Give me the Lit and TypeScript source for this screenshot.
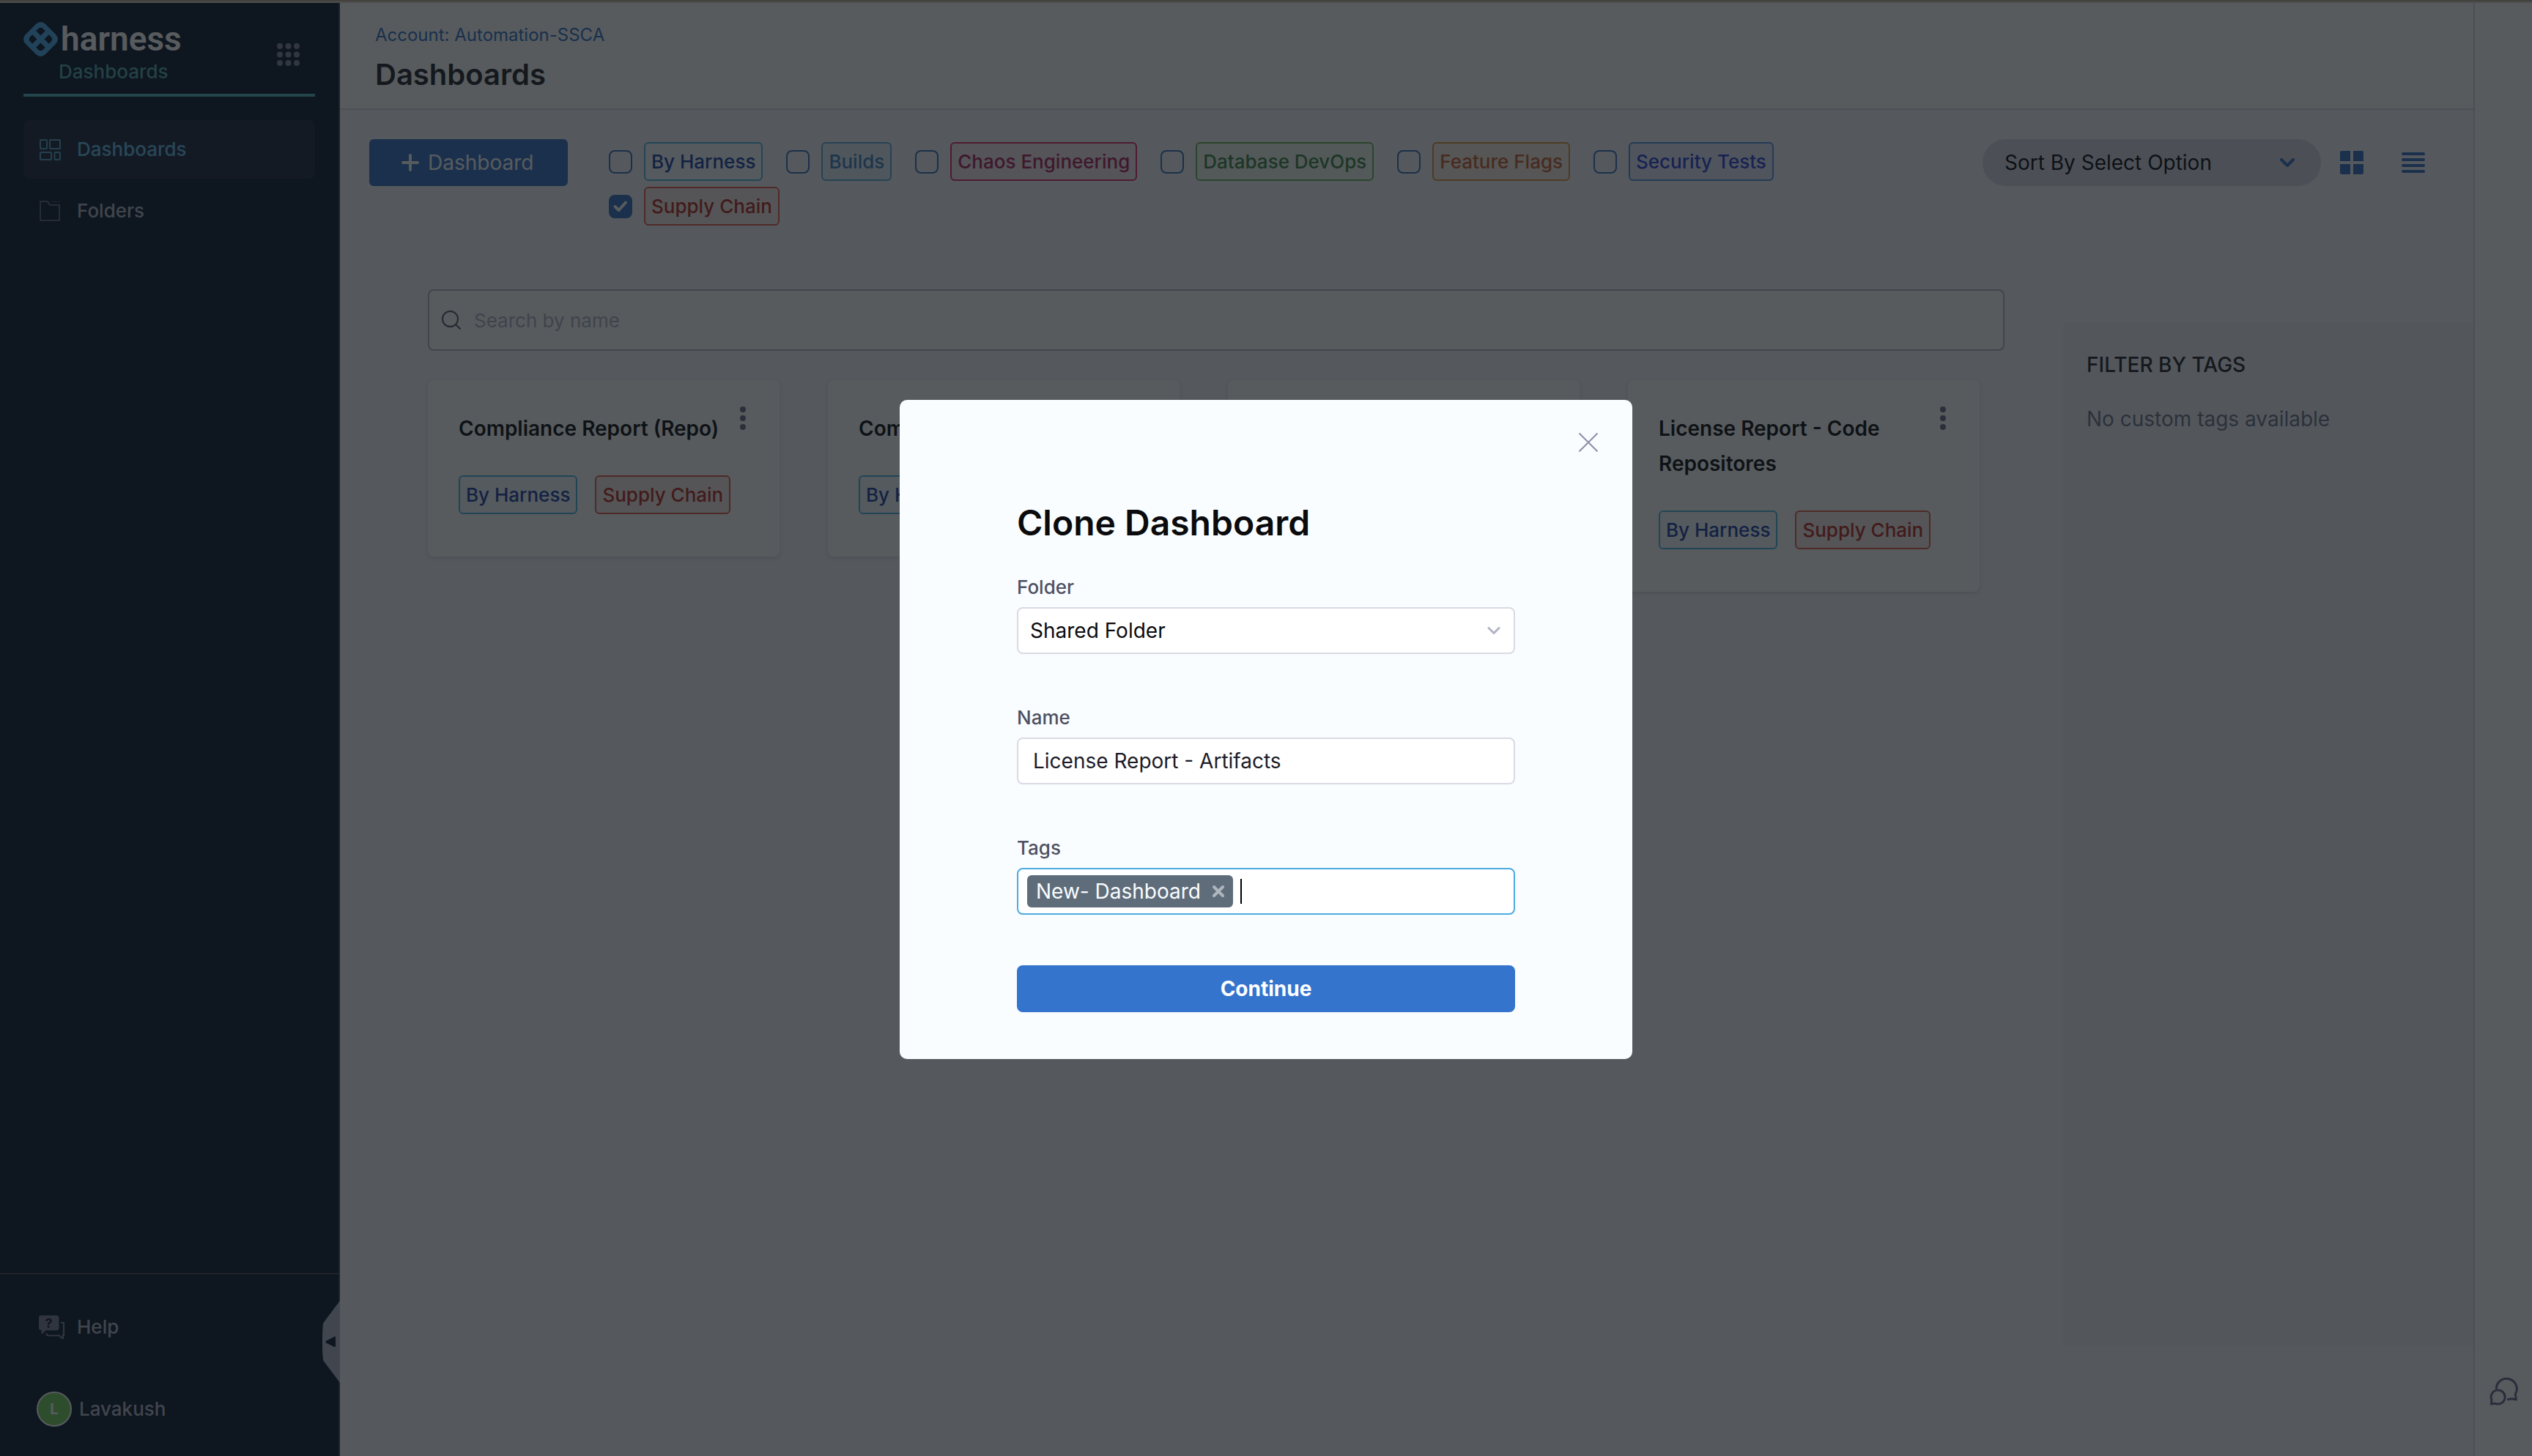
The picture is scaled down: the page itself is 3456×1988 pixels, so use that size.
import { LitElement, html, svg, css, nothing } from "lit";
import { customElement, property, state } from "lit/decorators.js";
import { classMap } from "lit/directives/class-map.js";

interface Tag {
  label: string;
  tone: string;
}

interface Dashboard {
  name: string;
  tags: string[];
}

const TAGS: Record<string, Tag> = {
  harness: { label: "By Harness", tone: "harness" },
  builds: { label: "Builds", tone: "builds" },
  chaos: { label: "Chaos Engineering", tone: "chaos" },
  database: { label: "Database DevOps", tone: "database" },
  flags: { label: "Feature Flags", tone: "flags" },
  security: { label: "Security Tests", tone: "security" },
  supply: { label: "Supply Chain", tone: "supply" },
};

const DASHBOARDS: Dashboard[] = [
  { name: "Compliance Report (Repo)", tags: ["harness", "supply"] },
  { name: "Compliance Report", tags: ["harness"] },
  { name: "License Report - Artifacts", tags: ["harness"] },
  { name: "License Report - Code Repositores", tags: ["harness", "supply"] },
];

const base = css`
  *,
  *::before,
  *::after {
    box-sizing: border-box;
  }
  :host {
    display: block;
    font-family: Inter, "Liberation Sans", sans-serif;
  }
  svg {
    display: block;
    flex: none;
  }
  button {
    font: inherit;
    color: inherit;
    background: none;
    border: 0;
    padding: 0;
    cursor: pointer;
  }
  a {
    color: inherit;
    text-decoration: none;
  }
  h1,
  h2,
  h3,
  p {
    margin: 0;
  }
`;

@customElement("tag-pill")
export class TagPill extends LitElement {
  @property() tone = "harness";

  static styles = [
    base,
    css`
      .pill {
        display: block;
        padding: 0 8px;
        border: 2px solid;
        border-radius: 6px;
        font-size: 26px;
        line-height: 49px;
        font-weight: 500;
        white-space: nowrap;
      }
      .harness {
        color: #1b3fa4;
        border-color: #4cb4e0;
        background: #f6fcff;
      }
      .builds {
        color: #4080c0;
        border-color: #5cacdc;
        background: #e4f1fc;
      }
      .chaos {
        color: #b01c58;
        border-color: #e02868;
        background: #f4e8ee;
      }
      .database {
        color: #3c8444;
        border-color: #68b45c;
        background: #f2f8ef;
      }
      .flags {
        color: #cc6030;
        border-color: #e4903c;
        background: #f8eee0;
      }
      .security {
        color: #2c40d8;
        border-color: #5490e8;
        background: #e8eafc;
      }
      .supply {
        color: #b82820;
        border-color: #e45c48;
        background: #f7ebe8;
      }
    `,
  ];

  render() {
    return html`<span class="pill ${this.tone}"><slot></slot></span>`;
  }
}

@customElement("side-nav")
export class SideNav extends LitElement {
  static styles = [
    base,
    css`
      :host {
        display: flex;
        flex-direction: column;
        position: relative;
        background: #0c1a2e;
        border-right: 2px solid #40404c;
        color: #b4b5c6;
        font-size: 26px;
        line-height: 32px;
        font-weight: 500;
      }
      .brand {
        display: flex;
        justify-content: space-between;
        align-items: flex-start;
        height: 128px;
        margin: 0 32px;
        padding: 26px 21px 0 0;
        border-bottom: 4px solid #53b4be;
      }
      .logo {
        display: flex;
        align-items: center;
        gap: 4px;
        color: #fff;
        font-family: Roboto, "Liberation Sans", sans-serif;
        font-size: 46px;
        line-height: 47px;
        font-weight: 600;
      }
      .module {
        display: block;
        margin-top: 5px;
        padding-left: 48px;
        color: #53a8b0;
      }
      .apps {
        margin-top: 29px;
      }
      .links {
        display: grid;
        gap: 4px;
        margin: 32px 32px 0;
      }
      .link {
        display: flex;
        align-items: center;
        gap: 22px;
        height: 80px;
        padding-left: 22px;
        border-radius: 8px;
      }
      .link.active {
        background: #1e263c;
        color: #62bce8;
      }
      .foot {
        display: grid;
        gap: 48px;
        margin-top: auto;
        padding: 40px 0 32px 50px;
        border-top: 2px solid #40404c;
      }
      .row {
        display: flex;
        align-items: center;
        height: 64px;
      }
      .help {
        gap: 16px;
        padding-left: 3px;
      }
      .user {
        gap: 10px;
      }
      .avatar {
        width: 48px;
        height: 48px;
        border: 2px solid #fff;
        border-radius: 50%;
        background: #77d15d;
        color: #fff;
        font-size: 20px;
        line-height: 44px;
        font-weight: 700;
        text-align: center;
      }
      .collapse {
        position: absolute;
        right: -2px;
        bottom: 100px;
      }
      .q {
        font-size: 18px;
        font-weight: 700;
      }
    `,
  ];

  render() {
    const dots = [4, 15.5, 27];
    return html`
      <div class="brand">
        <div>
          <a class="logo" href="#home">
            <svg width="47" height="47" viewBox="-23.5 -23.5 47 47">
              <path transform="rotate(45)" fill="#4cacec" fill-rule="evenodd"
                d="M-10.2-19.2h20.4a9 9 0 0 1 9 9v20.4a9 9 0 0 1-9 9h-20.4a9 9 0 0 1-9-9v-20.4a9 9 0 0 1 9-9z
                M-8-12.4a4.4 4.4 0 0 0-4.4 4.4v4.4h8.8v-8.8z M8-12.4h-4.4v8.8h8.8V-8a4.4 4.4 0 0 0-4.4-4.4z
                M-12.4 3.6V8a4.4 4.4 0 0 0 4.4 4.4h4.4V3.6z M3.6 3.6v8.8H8A4.4 4.4 0 0 0 12.4 8V3.6z" />
            </svg>
            harness
          </a>
          <span class="module">Dashboards</span>
        </div>
        <button class="apps" aria-label="Modules">
          <svg width="31" height="31" viewBox="0 0 31 31" fill="#82829a">
            ${dots.map((y) => dots.map((x) => svg`<circle cx=${x} cy=${y} r="4" />`))}
          </svg>
        </button>
      </div>
      <nav class="links">
        <a class="link active" href="#dashboards">
          <svg width="29" height="29" viewBox="0 0 29 29" fill="none" stroke="#56a4c8" stroke-width="2">
            <rect x="1" y="1" width="9" height="12" rx="1" />
            <rect x="14" y="1" width="14" height="12" rx="1" />
            <rect x="1" y="18" width="15" height="10" rx="1" />
            <rect x="20.500" y="18" width="7.500" height="10" rx="1" />
          </svg>
          Dashboards
        </a>
        <a class="link" href="#folders">
          <svg width="29" height="29" viewBox="0 0 29 29" fill="none" stroke="#76788c">
            <path stroke-width="1.500" d="M1 1h10l3 5h13v21H1z" />
            <path stroke-width="1" opacity=".5" d="M15 1.500h13" />
          </svg>
          Folders
        </a>
      </nav>
      <div class="foot">
        <a class="row help" href="#help">
          <svg width="36" height="33" viewBox="0 0 36 33">
            <path fill="#7c7e94" d="M3 0h21a3.500 3.500 0 0 1 3.500 3.500V17a3.500 3.500 0 0 1-3.500 3.500H9.500L5 25H3.500v-4.800A3.500 3.500 0 0 1 0 17V3a3 3 0 0 1 3-3z" />
            <path fill="none" stroke="#7c7e94" stroke-width="2.200" d="M30 10h4v17h-1v4h-1.500L28 27.500H13q-2.500 0-2.500-3" />
            <text class="q" x="13.500" y="17" text-anchor="middle" fill="#0c1a2e">?</text>
          </svg>
          Help
        </a>
        <a class="row user" href="#profile"><span class="avatar">L</span>Lavakush</a>
      </div>
      <button class="collapse" aria-label="Collapse navigation">
        <svg width="24" height="112" viewBox="0 0 24 112">
          <path fill="#b4b5c6" d="M24 0L1.500 30Q0 34 0 56t1.500 26L24 112z" />
          <path fill="#0c1a2e" d="M5 55l11.500-6q1.500-.5 1.500 1v12q0 1.500-1.500 1L5 57.500q-1.500-1.200 0-2.500z" />
        </svg>
      </button>
    `;
  }
}

@customElement("dashboard-card")
export class DashboardCard extends LitElement {
  @property() name = "";
  @property({ attribute: false }) tags: string[] = [];

  static styles = [
    base,
    css`
      .card {
        padding: 36px 38px 58px 42px;
        border-radius: 8px;
        background: #fff;
        box-shadow: 0 2px 6px rgba(60, 60, 90, 0.16);
      }
      .head {
        display: flex;
        align-items: flex-start;
        justify-content: space-between;
      }
      .name {
        padding-top: 6px;
        color: #0b0b0d;
        font-size: 28px;
        line-height: 48px;
        font-weight: 600;
      }
      .menu {
        flex: none;
        width: 24px;
      }
      .menu svg {
        margin: 0 auto;
      }
      .tags {
        display: flex;
        gap: 24px;
        margin-top: 40px;
      }
    `,
  ];

  render() {
    return html`
      <article class="card">
        <div class="head">
          <h3 class="name">${this.name}</h3>
          <button class="menu" aria-label="Dashboard options">
            <svg width="8" height="32" viewBox="0 0 8 32" fill="#6b6d85">
              <circle cx="4" cy="4" r="4" />
              <circle cx="4" cy="16" r="4" />
              <circle cx="4" cy="28" r="4" />
            </svg>
          </button>
        </div>
        <div class="tags">
          ${this.tags.map((key) => html`<tag-pill tone=${TAGS[key].tone}>${TAGS[key].label}</tag-pill>`)}
        </div>
      </article>
    `;
  }
}

@customElement("clone-dialog")
export class CloneDialog extends LitElement {
  @state() private tags = ["New- Dashboard"];

  static styles = [
    base,
    css`
      .dialog {
        position: relative;
        width: 1000px;
        padding: 140px 160px 64px;
        border-radius: 10px;
        background: #f9fdff;
        color: #0b0b0d;
      }
      .close {
        position: absolute;
        top: 45px;
        right: 47px;
      }
      .title {
        font-size: 48px;
        line-height: 56px;
        font-weight: 600;
      }
      .fields {
        display: grid;
        grid-template-columns: minmax(0, 1fr);
        gap: 71px;
        margin-top: 44px;
      }
      .field {
        display: grid;
        grid-template-columns: minmax(0, 1fr);
        gap: 11px;
      }
      .label {
        color: #4f5162;
        font-size: 26px;
        line-height: 32px;
        font-weight: 500;
      }
      .control {
        display: flex;
        align-items: center;
        width: 100%;
        height: 64px;
        border: 2px solid #d9dae5;
        border-radius: 8px;
        background: #fff;
        color: #0b0b0d;
        font-family: inherit;
        font-size: 28px;
        outline: none;
      }
      .picker {
        display: grid;
        grid-template-columns: minmax(0, 1fr);
        align-items: center;
      }
      .picker > * {
        grid-area: 1 / 1;
      }
      .picker svg {
        justify-self: end;
        margin-right: 20px;
        pointer-events: none;
      }
      .select {
        appearance: none;
        padding: 0 16px;
      }
      .text {
        padding: 0 20px;
        color: #1c1c28;
      }
      .multi {
        padding: 0 12px;
        border-color: #4dabe0;
      }
      .chip {
        display: flex;
        align-items: center;
        gap: 16px;
        height: 44px;
        padding: 0 12px;
        border-radius: 6px;
        background: #5f6d7b;
        color: #f9fdff;
        white-space: nowrap;
      }
      .caret {
        width: 2px;
        height: 34px;
        margin-left: 10px;
        background: #000;
      }
      .entry {
        flex: 1;
        min-width: 0;
        height: 40px;
        padding: 0;
        border: 0;
        outline: none;
        background: none;
        font: inherit;
      }
      .submit {
        display: block;
        width: 100%;
        height: 64px;
        margin-top: 69px;
        border-radius: 8px;
        background: #3474cc;
        color: #fff;
        font-size: 28px;
        font-weight: 700;
      }
    `,
  ];

  private removeTag(tag: string) {
    this.tags = this.tags.filter((t) => t !== tag);
  }

  render() {
    return html`
      <form class="dialog" role="dialog" aria-labelledby="title" @submit=${(e: Event) => e.preventDefault()}>
        <button class="close" type="button" aria-label="Close">
          <svg width="26" height="26" viewBox="0 0 26 26" stroke="#8d8fa6" stroke-width="2">
            <path d="M0.500 0.500l25 25M25.500 0.500l-25 25" />
          </svg>
        </button>
        <h2 class="title" id="title">Clone Dashboard</h2>
        <div class="fields">
          <div class="field">
            <label class="label" for="folder">Folder</label>
            <div class="picker">
              <select class="control select" id="folder">
                <option>Shared Folder</option>
              </select>
              <svg width="18" height="10" viewBox="0 0 18 10" fill="none" stroke="#b2b3c6" stroke-width="3" stroke-linecap="round" stroke-linejoin="round">
                <path d="M2 1.500l7 7 7-7" />
              </svg>
            </div>
          </div>
          <div class="field">
            <label class="label" for="name">Name</label>
            <input class="control text" id="name" type="text" .value=${"License Report - Artifacts"} />
          </div>
          <div class="field">
            <label class="label" for="tags">Tags</label>
            <div class="control multi">
              ${this.tags.map(
                (tag) => html`<span class="chip">
                  ${tag}
                  <button type="button" aria-label="Remove tag" @click=${() => this.removeTag(tag)}>
                    <svg width="16" height="16" viewBox="0 0 16 16" stroke="#aeb5bc" stroke-width="4" stroke-linecap="round">
                      <path d="M2 2l12 12M14 2L2 14" />
                    </svg>
                  </button>
                </span>`,
              )}
              <span class="caret"></span>
              <input class="entry" id="tags" type="text" />
            </div>
          </div>
        </div>
        <button class="submit" type="submit">Continue</button>
      </form>
    `;
  }
}

@customElement("app-root")
export class AppRoot extends LitElement {
  @state() private selected = new Set(["supply"]);
  @state() private dialogOpen = true;

  static styles = [
    base,
    css`
      .page {
        display: flex;
        flex-direction: column;
        min-height: 100vh;
      }
      .edge {
        height: 4px;
        border-top: 2px solid #43423f;
        background: #4d4d4c;
      }
      .shell {
        flex: 1;
        display: grid;
        grid-template-columns: 464px minmax(0, 1fr) 80px;
        background: #fff;
      }
      .main {
        display: flex;
        flex-direction: column;
        background: #f7f7fb;
      }
      .header {
        padding: 28px 48px 22px;
        background: #fff;
        border-bottom: 2px solid #d9dae5;
      }
      .crumb {
        display: block;
        color: #3070c4;
        font-size: 24px;
        line-height: 32px;
      }
      .heading {
        margin-top: 14px;
        color: #22222a;
        font-size: 40px;
        line-height: 48px;
        font-weight: 600;
      }
      .toolbar {
        display: flex;
        align-items: flex-start;
        padding: 40px 66px 0 40px;
      }
      .create {
        display: flex;
        flex: none;
        align-items: center;
        gap: 12px;
        width: 271px;
        height: 64px;
        padding-left: 44px;
        border-radius: 6px;
        background: #3670c4;
        color: #fff;
        font-size: 28px;
      }
      .filters {
        flex: 1;
        display: flex;
        flex-wrap: wrap;
        gap: 8px 32px;
        margin: 0 64px 0 56px;
        padding-top: 4px;
      }
      .filter {
        display: flex;
        align-items: center;
        gap: 16px;
      }
      .box {
        display: grid;
        width: 32px;
        height: 32px;
      }
      .box > * {
        grid-area: 1 / 1;
        place-self: center;
      }
      .tick {
        appearance: none;
        width: 32px;
        height: 32px;
        margin: 0;
        border: 2px solid #3870bc;
        border-radius: 8px;
      }
      .tick.on {
        background: #3670c4;
      }
      .box svg {
        pointer-events: none;
      }
      .sort {
        flex: none;
        display: grid;
        align-items: center;
        width: 462px;
        height: 64px;
      }
      .sort > * {
        grid-area: 1 / 1;
      }
      .sort svg {
        justify-self: end;
        margin-right: 36px;
        pointer-events: none;
      }
      .order {
        appearance: none;
        width: 100%;
        height: 64px;
        padding: 0 30px;
        border: 0;
        border-radius: 32px;
        background: #d9dae5;
        color: #08080e;
        font: inherit;
        font-size: 28px;
      }
      .view {
        flex: none;
        display: grid;
        place-items: center;
        width: 32px;
        height: 64px;
      }
      .grid-view {
        margin: 0 52px 0 26px;
      }
      .body {
        flex: 1;
        display: flex;
        gap: 80px;
        padding-left: 120px;
      }
      .results {
        flex: 1;
        min-width: 0;
        padding-top: 87px;
      }
      .search {
        display: flex;
        align-items: center;
        gap: 18px;
        height: 84px;
        padding: 0 17px;
        border: 2px solid #b4b5c6;
        border-radius: 8px;
        background: #fff;
      }
      .query {
        flex: 1;
        min-width: 0;
        height: 48px;
        padding: 0;
        border: 0;
        outline: none;
        background: none;
        font: inherit;
        font-size: 26px;
      }
      .query::placeholder {
        color: #b0b1c4;
        opacity: 1;
      }
      .cards {
        display: grid;
        grid-template-columns: repeat(auto-fill, 480px);
        align-items: start;
        gap: 66px;
        margin-top: 40px;
      }
      .aside {
        flex: none;
        width: 560px;
        margin: 133px 0 150px;
        padding: 39px 32px;
        background: #f1f1f7;
        color: #70728a;
        font-size: 28px;
        line-height: 36px;
      }
      .caption {
        margin-bottom: 38px;
        color: #22222a;
        font-size: 28px;
        font-weight: 500;
      }
      .rail {
        display: flex;
        flex-direction: column;
        justify-content: flex-end;
        align-items: flex-start;
        padding: 0 0 69px 20px;
        border-left: 2px solid #d9dae5;
        background: #fff;
      }
      .backdrop {
        position: fixed;
        inset: 4px 0 0;
        display: grid;
        place-items: center;
        background: rgba(16, 22, 26, 0.7);
      }
    `,
  ];

  private toggle(key: string) {
    const next = new Set(this.selected);
    if (!next.delete(key)) next.add(key);
    this.selected = next;
  }

  private renderFilter(key: string, tag: Tag) {
    const on = this.selected.has(key);
    return html`
      <label class="filter">
        <span class="box">
          <input class=${classMap({ tick: true, on })} type="checkbox" .checked=${on} @change=${() => this.toggle(key)} />
          ${on
            ? html`<svg width="20" height="16" viewBox="0 0 20 16" fill="none" stroke="#fff" stroke-width="4" stroke-linecap="round" stroke-linejoin="round">
                <path d="M2.500 8l5 5L17 2.500" />
              </svg>`
            : nothing}
        </span>
        <tag-pill tone=${tag.tone}>${tag.label}</tag-pill>
      </label>
    `;
  }

  render() {
    return html`
      <div class="page">
        <div class="edge"></div>
        <div class="shell">
          <side-nav></side-nav>
          <main class="main">
            <header class="header">
              <a class="crumb" href="#account">Account: Automation-SSCA</a>
              <h1 class="heading">Dashboards</h1>
            </header>
            <div class="toolbar">
              <button class="create">
                <svg width="24" height="24" viewBox="0 0 24 24" stroke="#fff" stroke-width="4" stroke-linecap="round">
                  <path d="M12 2v20M2 12h20" />
                </svg>
                Dashboard
              </button>
              <div class="filters">${Object.entries(TAGS).map(([key, tag]) => this.renderFilter(key, tag))}</div>
              <div class="sort">
                <select class="order" aria-label="Sort order">
                  <option>Sort By Select Option</option>
                </select>
                <svg width="20" height="12" viewBox="0 0 20 12" fill="none" stroke="#3670c4" stroke-width="4" stroke-linecap="round" stroke-linejoin="round">
                  <path d="M2 2l8 8 8-8" />
                </svg>
              </div>
              <button class="view grid-view" aria-label="Grid view">
                <svg width="32" height="32" viewBox="0 0 32 32" fill="#3670c4">
                  <path d="M2 0h12v14H0V2q0-2 2-2zM18 0h12q2 0 2 2v12H18zM0 18h14v14H2q-2 0-2-2zM18 18h14v12q0 2-2 2H18z" />
                </svg>
              </button>
              <button class="view" aria-label="List view">
                <svg width="32" height="28" viewBox="0 0 32 28" stroke="#3670c4" stroke-width="4" stroke-linecap="round">
                  <path d="M2 2h28M2 10h28M2 18h28M2 26h28" />
                </svg>
              </button>
            </div>
            <div class="body">
              <section class="results">
                <div class="search">
                  <svg width="26" height="26" viewBox="0 0 26 26" fill="none" stroke="#555668" stroke-width="2">
                    <circle cx="11.500" cy="11.500" r="10.500" />
                    <path d="M19 19l6.500 6.500" />
                  </svg>
                  <input class="query" type="search" placeholder="Search by name" aria-label="Search by name" />
                </div>
                <div class="cards">
                  ${DASHBOARDS.map(
                    (item) => html`<dashboard-card .name=${item.name} .tags=${item.tags}></dashboard-card>`,
                  )}
                </div>
              </section>
              <aside class="aside">
                <h2 class="caption">FILTER BY TAGS</h2>
                <p>No custom tags available</p>
              </aside>
            </div>
          </main>
          <div class="rail">
            <button aria-label="Chat">
              <svg width="39" height="38" viewBox="0 0 39 38" fill="none" stroke="#66688a" stroke-width="3" stroke-linecap="round" stroke-linejoin="round">
                <path d="M9.300 14.500A14 14 0 1 1 35.300 22.500l1 7.500-6-1.200-5 1" />
                <path d="M2.300 36l.7-5.500A9.500 9.500 0 1 1 8 35.300z" />
              </svg>
            </button>
          </div>
        </div>
      </div>
      ${this.dialogOpen ? html`<div class="backdrop"><clone-dialog></clone-dialog></div>` : nothing}
    `;
  }
}
